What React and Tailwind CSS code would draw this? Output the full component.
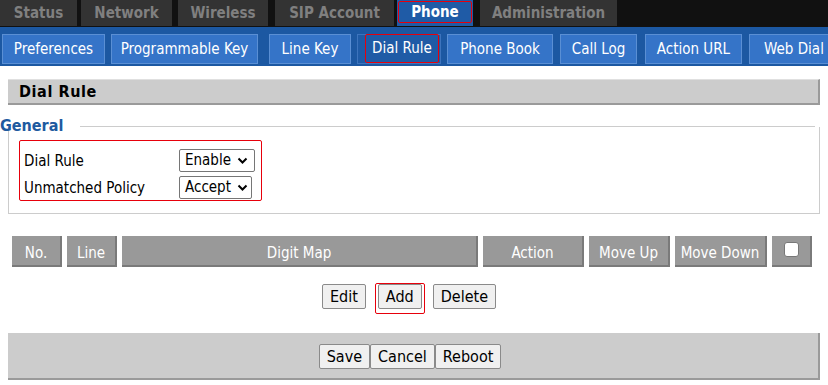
import React from 'react';

const topTabs = [
  { name: 'Status', w: 77, ml: 0 },
  { name: 'Network', w: 91, ml: 4 },
  { name: 'Wireless', w: 90, ml: 6 },
  { name: 'SIP Account', w: 119, ml: 7 },
  { name: 'Phone', w: 76, ml: 3, active: true },
  { name: 'Administration', w: 137, ml: 7 },
];

const subTabs = [
  { name: 'Preferences', w: 103, ml: 2 },
  { name: 'Programmable Key', w: 147, ml: 6 },
  { name: 'Line Key', w: 82, ml: 11 },
  { name: 'Dial Rule', w: 84, ml: 6, active: true },
  { name: 'Phone Book', w: 106, ml: 6 },
  { name: 'Call Log', w: 77, ml: 7 },
  { name: 'Action URL', w: 97, ml: 8 },
  { name: 'Web Dial', w: 90, ml: 7 },
];

const cols = [
  { name: 'No.', w: 50 },
  { name: 'Line', w: 50 },
  { name: 'Digit Map', w: 356 },
  { name: 'Action', w: 101 },
  { name: 'Move Up', w: 81 },
  { name: 'Move Down', w: 92 },
];

const Chevron = () => (
  <svg width="11" height="8" viewBox="0 0 11 8" className="ml-[6px]">
    <path d="M1.5 1.5 L5.5 5.5 L9.5 1.5" fill="none" stroke="#000" strokeWidth="2" />
  </svg>
);

const Btn = ({ children, className = '' }) => (
  <button className={`h-[25px] px-[7px] bg-[#f0f0f0] border border-[#8a8a8a] rounded-[2px] text-[16px] text-black leading-none ${className}`}>
    {children}
  </button>
);

export default function App() {
  return (
    <div
      className="w-[828px] h-[385px] bg-white overflow-hidden"
      style={{ fontFamily: '"DejaVu Sans Condensed", "Liberation Sans", Arial, sans-serif' }}
    >
      {/* top nav */}
      <div className="flex h-[27px] bg-[#111]">
        {topTabs.map(t => (
          <div
            key={t.name}
            style={{ width: t.w, marginLeft: t.ml }}
            className={`h-[26px] flex items-center justify-center font-bold text-[15px] ${
              t.active ? 'bg-[#1f5ba6] text-white' : 'bg-[#333] text-[#808080]'
            }`}
          >
            {t.active ? (
              <span className="w-[74px] h-[22px] mt-[-2px] border border-red-600 rounded-[2px] flex items-center justify-center">{t.name}</span>
            ) : t.name}
          </div>
        ))}
      </div>

      {/* sub nav */}
      <div className="flex items-start h-[39px] bg-[#1c58a2] pt-[7px] overflow-hidden">
        {subTabs.map(t => (
          <div
            key={t.name}
            style={{ width: t.w, marginLeft: t.ml }}
            className={`shrink-0 h-[30px] flex items-center justify-center text-[15px] text-white border ${
              t.active ? 'bg-[#1f5ba6] border-[#3d74bd]' : 'bg-[#3574c8] border-[#5a8fd4]'
            }`}
          >
            {t.active ? (
              <span className="w-[74px] h-[29px] ml-[6px] mt-[-1px] border border-red-600 rounded-[2px] flex items-center justify-center">{t.name}</span>
            ) : t.name}
          </div>
        ))}
      </div>

      {/* section header */}
      <div className="mx-[8px] mt-[13px] h-[26px] bg-[#cccccc] border-t border-[#e0e0e0] border-b-2 border-b-[#9a9a9a] border-r-2 border-r-[#9a9a9a] flex items-center pl-[11px] font-bold text-[16px] text-black tracking-[0.6px]">
        Dial Rule
      </div>

      {/* general fieldset */}
      <div className="relative mt-[12px]">
        <div className="text-[#1e5aa0] font-bold text-[16px] leading-[18px]">General</div>
        <div className="absolute left-[80px] right-[13px] top-[9px] border-t border-[#cccccc]" />
        <div className="mx-[8px] mt-[-8px] h-[87px] border border-[#cccccc] border-t-0 pl-[10px] pt-[13px]">
          <div className="w-[243px] h-[61px] border border-red-600 rounded-[2px] pl-[4px] pt-[8px] text-[15px] text-black">
            <div className="flex items-center h-[23px]">
              <span className="w-[155px] pt-[1px]">Dial Rule</span>
              <div className="w-[76px] h-[23px] border border-[#767676] rounded-[2px] flex items-center pl-[5px]">
                Enable<Chevron />
              </div>
            </div>
            <div className="flex items-center h-[23px] mt-[4px]">
              <span className="w-[155px] pt-[1px]">Unmatched Policy</span>
              <div className="w-[73px] h-[23px] border border-[#767676] rounded-[2px] flex items-center pl-[5px]">
                Accept<Chevron />
              </div>
            </div>
          </div>
        </div>
      </div>

      {/* table header */}
      <div className="flex gap-[5px] ml-[12px] mt-[22px]">
        {cols.map(c => (
          <div
            key={c.name}
            style={{ width: c.w }}
            className="h-[31px] pt-[6px] bg-[#999] border-b-2 border-r-2 border-[#7a7a7a] flex items-center justify-center text-white text-[15px]"
          >
            {c.name}
          </div>
        ))}
        <div className="w-[40px] h-[31px] bg-[#999] border-b-2 border-r-2 border-[#7a7a7a] flex items-center justify-center">
          <div className="w-[15px] h-[15px] bg-white rounded-[3px] border border-[#777] mt-[-3px]" />
        </div>
      </div>

      {/* actions */}
      <div className="flex items-start justify-center mt-[16px] pr-[10px]">
        <Btn className="mt-[1px]">Edit</Btn>
        <div className="ml-[9px] px-[2px] pt-[0px] pb-[4px] border border-red-600 rounded-[2px]">
          <Btn>Add</Btn>
        </div>
        <Btn className="ml-[8px] mt-[1px]">Delete</Btn>
      </div>

      {/* footer */}
      <div className="mx-[8px] mt-[19px] h-[47px] bg-[#cccccc] border-b-2 border-b-[#9a9a9a] border-r-2 border-r-[#9a9a9a] flex items-center justify-center pr-[6px] pt-[2px]">
        <Btn>Save</Btn>
        <Btn>Cancel</Btn>
        <Btn>Reboot</Btn>
      </div>
    </div>
  );
}
